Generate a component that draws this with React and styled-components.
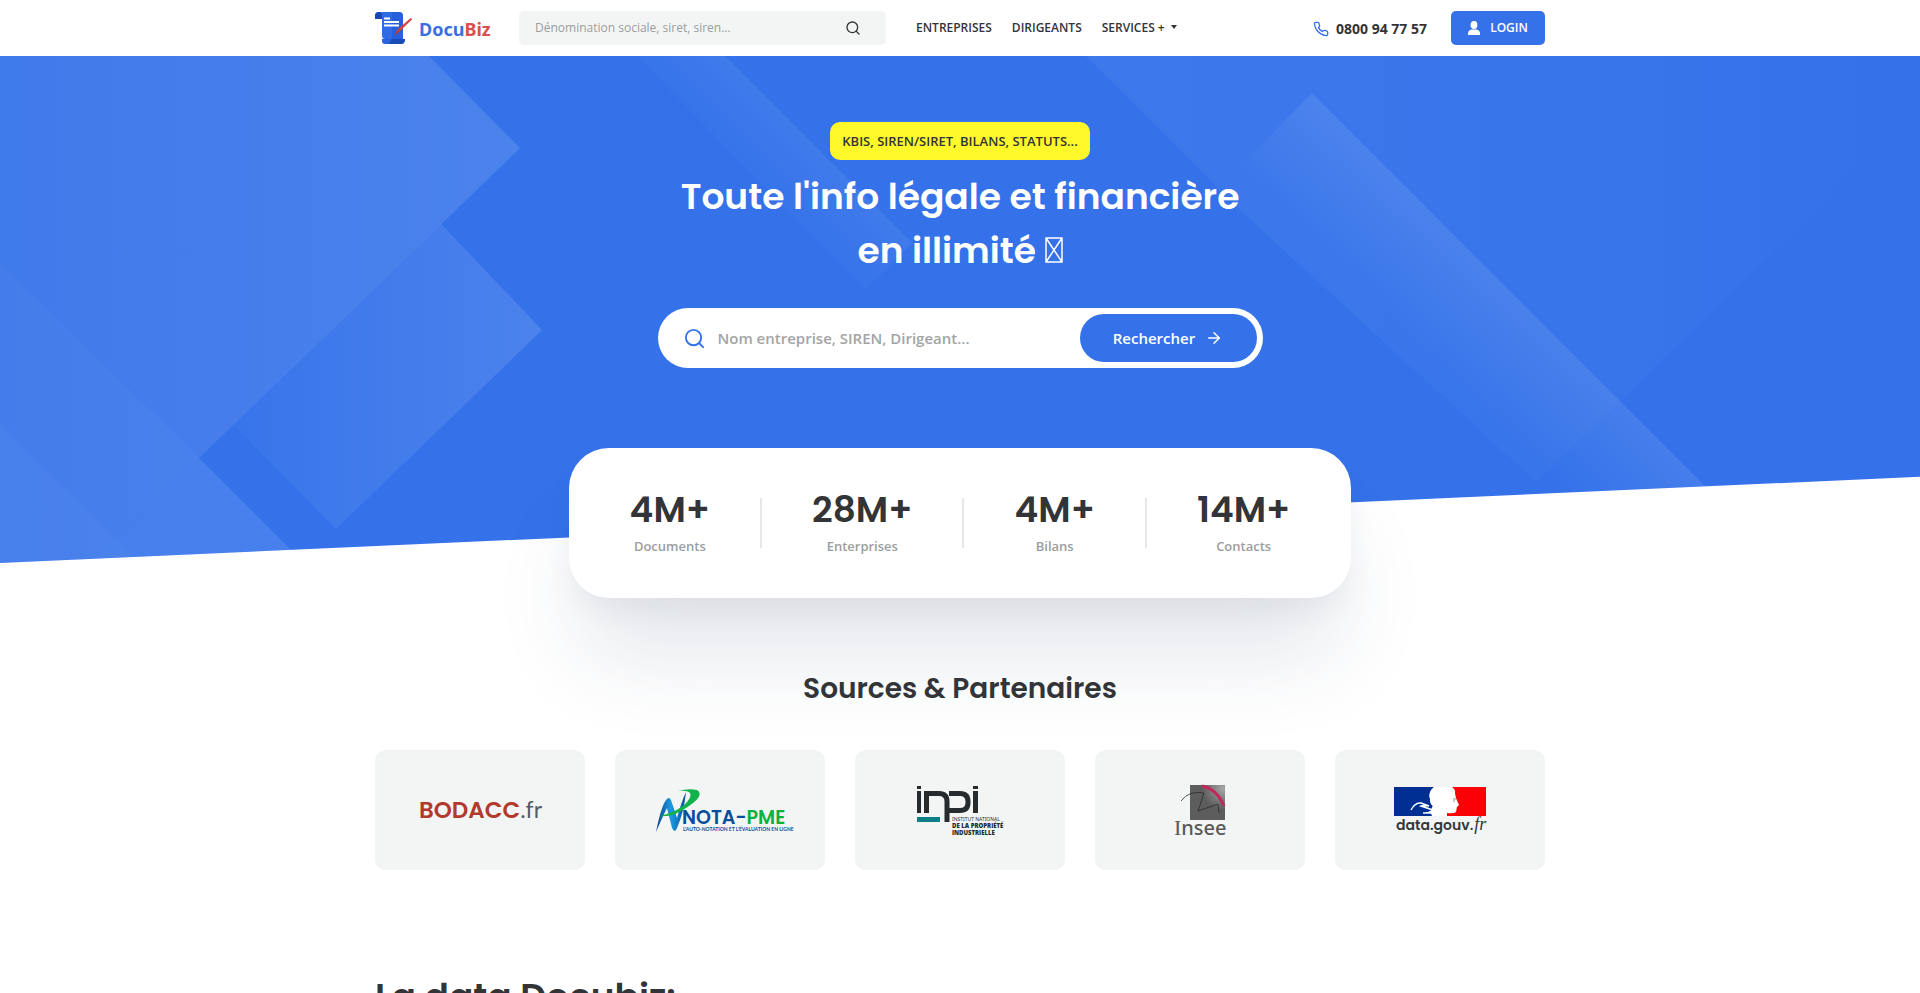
import React from 'react'
import styled, { createGlobalStyle } from 'styled-components'
import { FiSearch, FiPhone, FiArrowRight } from 'react-icons/fi'

const stats = [
    { value: '4M+', label: 'Documents' },
    { value: '28M+', label: 'Enterprises' },
    { value: '4M+', label: 'Bilans' },
    { value: '14M+', label: 'Contacts' },
]

function App() {
    return (
        <>
            <GlobalStyle />
            <Header />
            <main>
                <Hero />
                <Stats />
                <Partners />
                <DataSection>
                    <DataTitle>La data Docubiz:</DataTitle>
                </DataSection>
            </main>
        </>
    )
}

export default App


function Header() {
    return (
        <Bar>
            <Container>
                <Brand href="#">
                    <LogoIcon />
                    <BrandName>Docu<span>Biz</span></BrandName>
                </Brand>
                <TopSearch>
                    <input type="text" aria-label="Recherche" placeholder="Dénomination sociale, siret, siren..." />
                    <button type="submit" aria-label="Rechercher"><FiSearch size={16} /></button>
                </TopSearch>
                <Nav>
                    <a href="#">ENTREPRISES</a>
                    <a href="#">DIRIGEANTS</a>
                    <button type="button">SERVICES + <Caret /></button>
                </Nav>
                <Phone href="tel:0800947757">
                    <FiPhone size={16} color="#3572ea" />
                    0800 94 77 57
                </Phone>
                <Login type="button">
                    <svg width="12" height="14" viewBox="0 0 12 14" fill="#fff" aria-hidden="true">
                        <ellipse cx="6" cy="4" rx="3.4" ry="4" />
                        <path d="M0 14v-1.6C0 10.200 1.800 8.800 4 8.600h4c2.200.2 4 1.600 4 3.800V14z" />
                    </svg>
                    LOGIN
                </Login>
            </Container>
        </Bar>
    )
}

function LogoIcon() {
    return (
        <svg width="39" height="34" viewBox="0 0 39 34" aria-hidden="true">
            <path d="M6 1H24q4 0 4 4V28H10q-3 0-3-4V8H0V5Q0 1 4 1z" fill="#2f6be4" />
            <path d="M0 8V5q0-4 4-4 3 0 3 4v3z" fill="#1747b5" />
            <path d="M17 1h7q4 0 4 4v23H17z" fill="#1f55d0" opacity=".55" />
            <path d="M7 22v8q0 3 3 3h16q4 0 4-5H7z" fill="#2a63dc" />
            <path d="M16 28h14q0 5-4 5H13q3-1 3-5z" fill="#184bb8" />
            <path d="M9 7.500h6M9 11h15M9 14.500h15" stroke="#fff" strokeWidth="1.900" />
            <path d="M20 24l2-5L35 7.500q2-1 2 1L24 21z" fill="#d64541" />
            <path d="M20 24l5-6" stroke="#b03434" strokeWidth="1" />
        </svg>
    )
}

function Hero() {
    return (
        <HeroWrap>
            <Shapes viewBox="0 0 1920 507" preserveAspectRatio="xMidYMin slice" aria-hidden="true">
                <defs>
                    <linearGradient id="a" gradientUnits="userSpaceOnUse" x1="0" x2="520" y1="0" y2="0">
                        <stop offset="0" stopColor="#f0ffff" stopOpacity=".06" />
                        <stop offset="1" stopColor="#f0ffff" stopOpacity=".12" />
                    </linearGradient>
                    <linearGradient id="b" gradientUnits="userSpaceOnUse" x1="233" x2="542" y1="0" y2="0">
                        <stop offset="0" stopColor="#f0ffff" stopOpacity="0.02" />
                        <stop offset="1" stopColor="#f0ffff" stopOpacity=".12" />
                    </linearGradient>
                    <linearGradient id="e" gradientUnits="userSpaceOnUse" x1="1508" y1="233" x2="1435" y2="306">
                        <stop offset="0" stopColor="#f0ffff" stopOpacity=".09" />
                        <stop offset="1" stopColor="#f0ffff" stopOpacity="0" />
                    </linearGradient>
                    <linearGradient id="f" gradientUnits="userSpaceOnUse" x1="1080" x2="1900" y1="0" y2="0">
                        <stop offset="0" stopColor="#f0ffff" stopOpacity=".05" />
                        <stop offset="1" stopColor="#f0ffff" stopOpacity="0" />
                    </linearGradient>
                    <linearGradient id="g" gradientUnits="userSpaceOnUse" x1="820" y1="98" x2="765" y2="153">
                        <stop offset="0" stopColor="#f0ffff" stopOpacity=".06" />
                        <stop offset="1" stopColor="#f0ffff" stopOpacity="0" />
                    </linearGradient>
                </defs>
                <path d="M0 0H429L520 92 199 402 90 507H0z" fill="url(#a)" />
                <path d="M441 168L542 274 336 473 233 369z" fill="url(#b)" />
                <path d="M0 207L199 402 90 507H0z" fill="#fff" opacity=".025" />
                <path d="M199 402L304 507H90z" fill="#f0ffff" opacity=".1" />
                <path d="M0 366L141 507H0z" fill="#fff" opacity=".02" />
                <path d="M1086 0H1920V51L1537 426 1240 154z" fill="url(#f)" />
                <path d="M1312 37L1740 465 1560 440 1240 110z" fill="url(#e)" />
                <path d="M725 0L912 187 865 234 637 0z" fill="url(#g)" />
            </Shapes>
            <HeroBody>
                <Tag>KBIS, SIREN/SIRET, BILANS, STATUTS...</Tag>
                <Title>
                    Toute l'info légale et financière<br />
                    en illimité <Glyph viewBox="0 0 18 26" aria-hidden="true">
                        <path d="M1 1H17V25H1zL17 25M17 1L1 25" fill="none" stroke="#fff" strokeWidth="1.500" />
                    </Glyph>
                </Title>
                <SearchBox>
                    <FiSearch size={23} color="#3572ea" />
                    <input type="text" aria-label="Nom entreprise" placeholder="Nom entreprise, SIREN, Dirigeant..." />
                    <button type="submit">Rechercher <FiArrowRight size={18} /></button>
                </SearchBox>
            </HeroBody>
        </HeroWrap>
    )
}

function Stats() {
    return (
        <StatsCard>
            {stats.map((s) => (
                <Stat key={s.label}>
                    <strong>{s.value}</strong>
                    <span>{s.label}</span>
                </Stat>
            ))}
        </StatsCard>
    )
}

function Partners() {
    return (
        <PartnersWrap>
            <SectionTitle>Sources &amp; Partenaires</SectionTitle>
            <PartnerGrid>
                <Partner><Bodacc /></Partner>
                <Partner><NotaPme /></Partner>
                <Partner><Inpi /></Partner>
                <Partner><Insee /></Partner>
                <Partner><DataGouv /></Partner>
            </PartnerGrid>
        </PartnersWrap>
    )
}

function Bodacc() {
    return (
        <svg width="210" height="120" viewBox="0 0 210 120" role="img" aria-label="BODACC.fr">
            <text x="44" y="68" fontFamily="Poppins, Lato" fontSize="23" fontWeight="600" fill="#b23a2d">
                BODACC<tspan fontFamily="Lato" fontWeight="400" fill="#555b66">.fr</tspan>
            </text>
        </svg>
    )
}

function NotaPme() {
    return (
        <svg width="210" height="120" viewBox="0 0 210 120" role="img" aria-label="NOTA-PME">
            <defs>
                <linearGradient id="nota" x1="0" x2="1" y1="0" y2="0">
                    <stop offset="0" stopColor="#0b3f8c" />
                    <stop offset=".5" stopColor="#1a9be0" />
                    <stop offset="1" stopColor="#0b4f9e" />
                </linearGradient>
            </defs>
            <path d="M41 82Q46 57 51 50Q54 46 56 50L62 68Q67 50 71 42Q69 62 62 78Q60 84 57 78L52 58Q47 68 41 82z" fill="url(#nota)" />
            <path d="M37 68Q57 64 68 56Q78 47 75 43Q72 40 63 41Q74 38 82 40Q90 45 74 56Q60 66 51 66Q43 66 37 68z" fill="#12b24a" />
            <text x="67" y="74" fontFamily="Poppins, Lato" fontSize="19" fontWeight="600" fill="#064e9c">
                NOTA-<tspan fill="#08b33c">PME</tspan>
            </text>
            <text x="68" y="81" fontFamily="Lato" fontSize="5" fontWeight="700" fill="#064e9c">L'AUTO-NOTATION ET L'ÉVALUATION EN LIGNE</text>
        </svg>
    )
}

function Inpi() {
    return (
        <svg width="210" height="120" viewBox="0 0 210 120" role="img" aria-label="inpi">
            <path d="M62 36h4v3h-4zM62 41h4v22h-4zM118 36h5v3h-5zM118 41h5v22h-5z" fill="#262b2d" />
            <path d="M71.500 63V43.500H84q8 0 8 8V72" fill="none" stroke="#262b2d" strokeWidth="5" />
            <path d="M94 43.500h11q8 0 8 8v1q0 8-8 8H93" fill="none" stroke="#262b2d" strokeWidth="5" />
            <path d="M62 67h23v5H62z" fill="#0d7d86" />
            <g fontFamily="Open Sans" fontSize="6" fontWeight="800" fill="#262b2d">
                <text x="97" y="71" fontFamily="Noto Sans" fontSize="5" fontWeight="400">INSTITUT NATIONAL</text>
                <text x="97" y="78">DE LA PROPRIÉTÉ</text>
                <text x="97" y="85">INDUSTRIELLE</text>
            </g>
        </svg>
    )
}

function Insee() {
    return (
        <svg width="210" height="120" viewBox="0 0 210 120" role="img" aria-label="Insee">
            <defs>
                <radialGradient id="insee" cx=".95" cy=".1" r=".6">
                    <stop offset="0" stopColor="#a5a5a5" />
                    <stop offset="1" stopColor="#5d5d5d" />
                </radialGradient>
            </defs>
            <path d="M95 35h35v35H95z" fill="url(#insee)" />
            <path d="M107 36q15 3 22 20" fill="none" stroke="#c2285a" strokeWidth="3" />
            <path d="M86 51Q94 40 109 43L103 61 123 54 124 63" fill="none" stroke="#2c2c2c" strokeWidth=".8" />
            <text x="79" y="85" fontFamily="Noto Sans" fontSize="20" fontWeight="500" fill="#585858">
                <tspan fontFamily="Liberation Serif" fontSize="22">I</tspan>nsee
            </text>
        </svg>
    )
}

function DataGouv() {
    return (
        <svg width="210" height="120" viewBox="0 0 210 120" role="img" aria-label="data.gouv.fr">
            <path d="M59 37h40q-6 5-4 12 0 5 3 7-3 4-1 10H59z" fill="#002f94" />
            <path d="M99 37h18q2 2 2 6l1 5 3 7-2 2-1 5q-2 2-9 1v3H97q-2-6 1-10-3-2-3-7-2-7 4-12z" fill="#fff" />
            <path d="M117 37h34v29h-39v-3q7 1 9-1l1-5 2-2-3-7-1-5q1-3-3-6z" fill="#fb0007" />
            <path d="M76 60q4-8 10-7l8 3q-6-1-8 0l12 4q-4 3-10 3h9" fill="none" stroke="#fff" strokeWidth="1.500" />
            <path d="M118 49h3M118 51h2" stroke="#777" strokeWidth=".8" />
            <text x="61" y="80" fontFamily="Poppins, Lato" fontSize="14" fontWeight="600" fill="#33373c">
                data.gouv<tspan fontFamily="Liberation Serif" fontWeight="400" fontStyle="italic" fontSize="18">.fr</tspan>
            </text>
        </svg>
    )
}


const GlobalStyle = createGlobalStyle`
* {
    box-sizing: border-box;
}

body {
    margin: 0;
    background: #fff;
    color: #333437;
    font-family: 'Open Sans', 'Noto Sans', sans-serif;
    scrollbar-width: none;
}

a {
    color: inherit;
    text-decoration: none;
}

button, input {
    border: 0;
    background: none;
    font: inherit;
    color: inherit;
    outline: none;
}

button {
    cursor: pointer;
}
`

const Bar = styled.header`
height: 56px;
background: #fff;
`

const Container = styled.div`
max-width: 1170px;
height: 100%;
margin: 0 auto;
display: flex;
align-items: center;
`

const Brand = styled.a`
display: flex;
align-items: center;
gap: 5px;
width: 144px;
`

const BrandName = styled.div`
padding-top: 2px;
font-family: 'Noto Sans', sans-serif;
font-size: 18px;
font-weight: 700;
line-height: 24px;
color: #3a6fdf;

span {
    color: #d9504c;
}
`

const TopSearch = styled.form`
display: flex;
align-items: center;
width: 367px;
height: 34px;
padding: 0 16px;
border-radius: 5px;
background: #f3f5f5;
font-size: 12px;

input {
    flex: 1;
    padding: 0 0 2px;
}

input::placeholder {
    color: #9b9d9f;
    opacity: 1;
}

button {
    display: flex;
    padding: 0 9px;
}
`

const Nav = styled.nav`
display: flex;
align-items: center;
gap: 20px;
margin-left: 30px;
padding-bottom: 2px;
font-size: 12px;
font-weight: 600;

button {
    display: flex;
    align-items: center;
    gap: 6px;
    padding: 0;
}
`

const Caret = styled.span`
border: 3px solid transparent;
border-top: 4px solid #333437;
border-bottom: 0;
`

const Phone = styled.a`
display: flex;
align-items: center;
gap: 7px;
margin-left: auto;
font-size: 14px;
font-weight: 700;

svg {
    margin-top: 2px;
}
`

const Login = styled.button`
display: flex;
align-items: center;
justify-content: center;
gap: 10px;
width: 94px;
height: 34px;
margin-left: 24px;
padding-bottom: 2px;
border-radius: 5px;
background: #3572ea;
color: #fff;
font-size: 12px;
font-weight: 600;
`

const HeroWrap = styled.section`
position: relative;
padding: 66px 0 195px;
background: #3572ea;
clip-path: polygon(0 0, 100% 0, 100% 83%, 0 100%);
`

const Shapes = styled.svg`
position: absolute;
inset: 0;
width: 100%;
height: 100%;
`

const HeroBody = styled.div`
position: relative;
display: flex;
flex-direction: column;
align-items: center;
`

const Tag = styled.div`
height: 38px;
padding: 0 12px;
border-radius: 10px;
background: #fff82b;
font-size: 13px;
font-weight: 600;
line-height: 38px;
`

const Title = styled.h1`
margin: 10px 0 30px;
color: #fff;
font-family: Poppins, Inter, sans-serif;
font-size: 36px;
font-weight: 600;
line-height: 54px;
text-align: center;
`

const Glyph = styled.svg`
width: 18px;
height: 26px;
`

const SearchBox = styled.form`
display: flex;
align-items: center;
width: 605px;
height: 60px;
padding: 6px 6px 6px 25px;
border-radius: 30px;
background: #fff;
font-size: 15px;
font-weight: 600;

input {
    flex: 1;
    padding: 0 12px;
}

input::placeholder {
    color: #a3a4a6;
    opacity: 1;
}

button {
    display: flex;
    align-items: center;
    justify-content: center;
    gap: 10px;
    width: 177px;
    height: 48px;
    border-radius: 24px;
    background: #3572ea;
    color: #fff;
}
`

const StatsCard = styled.section`
position: relative;
display: flex;
align-items: center;
justify-content: center;
width: 782px;
height: 150px;
margin: -115px auto 0;
border-radius: 40px;
background: #fff;
box-shadow: 0 70px 90px -15px rgba(40, 60, 100, .13), 0 15px 30px -5px rgba(40, 60, 90, .07);
`

const Stat = styled.div`
display: flex;
flex-direction: column;
align-items: center;
padding: 0 50px;

& + & {
    border-left: 2px solid #e6e7e9;
}

strong {
    margin: -16px 0 -2px;
    font-family: Poppins, Inter, sans-serif;
    font-size: 36px;
    font-weight: 600;
    line-height: 56px;
}

span {
    margin-bottom: -8px;
    color: #9b9d9f;
    font-size: 13px;
    font-weight: 600;
    line-height: 20px;
}
`

const PartnersWrap = styled.section`
position: relative;
max-width: 1170px;
margin: 0 auto;
padding-top: 69px;
`

const SectionTitle = styled.h2`
margin: 0 0 39px;
font-family: Poppins, Inter, sans-serif;
font-size: 28px;
font-weight: 600;
line-height: 44px;
text-align: center;
`

const PartnerGrid = styled.div`
display: grid;
grid-template-columns: repeat(5, minmax(0, 1fr));
gap: 30px;
`

const Partner = styled.div`
display: flex;
justify-content: center;
height: 120px;
border-radius: 10px;
background: #f3f5f5;
`

const DataSection = styled.section`
max-width: 1170px;
margin: 0 auto;
padding-top: 100px;
`

const DataTitle = styled.h2`
margin: 0;
font-family: Poppins, Inter, sans-serif;
font-size: 36px;
font-weight: 600;
line-height: 54px;
`
